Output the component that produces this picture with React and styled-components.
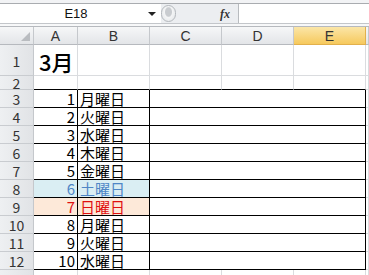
import React from "react";
import styled, { createGlobalStyle, css } from "styled-components";

const GlobalStyle = createGlobalStyle`
    body {
        margin: 0;
        background: #ffffff;
        font-family: "Noto Sans CJK JP", "Liberation Sans", sans-serif;
    }
`

const Window = styled.div`
    width: 369px;
    height: 275px;
    overflow: hidden;
    background: #f2f3f5;
    padding-top: 3px;
    box-sizing: border-box;
`
const Bar = styled.div`
    display: flex;
    height: 21px;
    box-sizing: border-box;
    border-top: 1px solid #a9acb0;
    border-bottom: 1px solid #c3c6ca;
    background: #eceef1;
`
const NameBox = styled.div`
    width: 161px;
    display: flex;
    align-items: center;
    background: #ffffff;
`
const NameText = styled.span`
    flex: 1;
    text-align: center;
    font-family: "Liberation Sans", sans-serif;
    font-size: 13px;
    line-height: 1;
    color: #111;
    padding-left: 4px;
`
const Arrow = styled.span`
    width: 0;
    height: 0;
    margin-right: 5px;
    border-left: 4px solid transparent;
    border-right: 4px solid transparent;
    border-top: 4px solid #222;
`
const Grip = styled.div`
    width: 15px;
    height: 17px;
    margin-top: 1px;
    border-radius: 8px;
    border: 1px solid #b4b8bd;
    box-sizing: border-box;
    background: radial-gradient(ellipse at 50% 40%, #c9ccd0 0 3px, #f4f5f6 4px, #dfe2e5 100%);
`
const Buttons = styled.div`
    width: 62px;
    display: flex;
    align-items: center;
    justify-content: flex-end;
    padding-right: 8px;
    box-sizing: border-box;
`
const Fx = styled.span`
    font-family: "Liberation Serif", serif;
    font-style: italic;
    font-weight: bold;
    font-size: 12px;
    line-height: 1;
    color: #333;
`
const Formula = styled.div`
    flex: 1;
    background: #ffffff;
    border-left: 1px solid #b8bbbf;
`
const Strip = styled.div`
    height: 2px;
    background: #f7f8f9;
`

const Sheet = styled.div`
    display: grid;
    grid-template-columns: 34px 44px 72px 72px 72px 72px 1fr;
    grid-template-rows: 18px 31px 14px repeat(10, 18px) 18px;
    border-top: 1px solid #b6b9be;
    background: #ffffff;
    line-height: 1;
`
const headBase = css`
    box-sizing: border-box;
    display: flex;
    align-items: center;
    justify-content: center;
    color: #333;
    font-size: 14px;
    border-right: 1px solid #c5c8cc;
    border-bottom: 1px solid #b6b9be;
    background: linear-gradient(#f6f7f8, #e3e5e8);
`
const Corner = styled.div`
    ${headBase};
    justify-content: flex-end;
    align-items: flex-end;
    padding: 0 3px 3px 0;
    &::after {
        content: "";
        border-left: 9px solid transparent;
        border-bottom: 9px solid #b9bcc0;
    }
`
const ColHead = styled.div`
    ${headBase};
    font-family: "Liberation Sans", sans-serif;
    ${p => p.$active && css`
        background: linear-gradient(#fbe6a8, #f6c95d);
        border-right-color: #e2b04c;
        border-bottom-color: #e2b04c;
    `}
`
const RowHead = styled.div`
    ${headBase};
    background: linear-gradient(90deg, #eef0f2, #e1e3e6);
    border-bottom: 1px solid #c9ccd0;
    padding-top: 1px;
`
const Cell = styled.div`
    box-sizing: border-box;
    display: flex;
    align-items: center;
    justify-content: ${p => p.$right ? "flex-end" : "flex-start"};
    padding: ${p => p.$right ? "0 2px 0 0" : "0 0 0 2px"};
    font-size: 15px;
    color: #000;
    border-right: 1px solid #dadcdf;
    border-bottom: 1px solid #dadcdf;
    grid-column: ${p => p.$span ? `span ${p.$span}` : "auto"};
    ${p => p.$ruled && css`border-bottom-color: #000;`}
    ${p => p.$boxed && css`
        border-right-color: #000;
        border-bottom-color: #000;
    `}
    ${p => p.$tone === "sat" && css`
        background: #daeef3;
        color: #4f86c6;
    `}
    ${p => p.$tone === "sun" && css`
        background: #fde9d9;
        color: #e01010;
    `}
`
const Title = styled(Cell)`
    font-size: 22px;
    font-weight: 500;
    padding-left: 5px;
    padding-top: 2px;
    white-space: nowrap;
`

const days = ["月", "火", "水", "木", "金", "土", "日", "月", "火", "水"];
const cols = ["A", "B", "C", "D", "E"];

function App() {
    return (
        <Window>
            <GlobalStyle />
            <Bar>
                <NameBox>
                    <NameText>E18</NameText>
                    <Arrow />
                </NameBox>
                <Grip />
                <Buttons><Fx>fx</Fx></Buttons>
                <Formula />
            </Bar>
            <Strip />
            <Sheet>
                <Corner />
                {cols.map(c => <ColHead key={c} $active={c === "E"}>{c}</ColHead>)}
                <ColHead />

                <RowHead>1</RowHead>
                <Title>3月</Title>
                <Cell /><Cell /><Cell /><Cell /><Cell />

                <RowHead>2</RowHead>
                <Cell $ruled /><Cell $ruled /><Cell $ruled /><Cell $ruled /><Cell $ruled /><Cell />

                {days.map((d, i) => {
                    const tone = i === 5 ? "sat" : i === 6 ? "sun" : undefined;
                    return (
                        <React.Fragment key={i}>
                            <RowHead>{i + 3}</RowHead>
                            <Cell $boxed $right $tone={tone}>{i + 1}</Cell>
                            <Cell $boxed $tone={tone}>{d}曜日</Cell>
                            <Cell $boxed $span={3} />
                            <Cell />
                        </React.Fragment>
                    );
                })}

                <RowHead />
                <Cell /><Cell /><Cell /><Cell /><Cell /><Cell />
            </Sheet>
        </Window>
    );
}

export default App;
